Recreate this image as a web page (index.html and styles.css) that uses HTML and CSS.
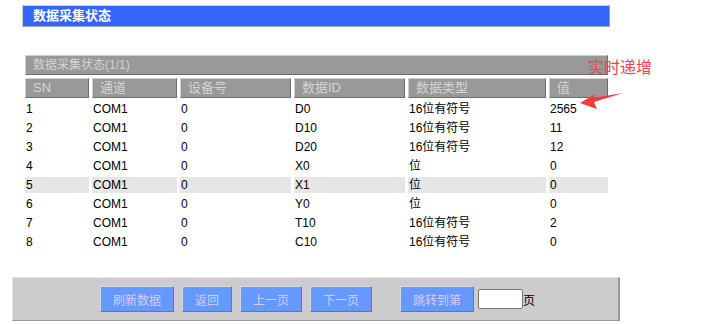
FILE: index.html
```html
<!DOCTYPE html>
<html lang="zh-CN">

<head>
    <meta charset="UTF-8">
    <meta name="viewport" content="width=device-width, initial-scale=1.0">
    <title>数据采集状态</title>
    <link rel="stylesheet" href="styles.css">
</head>

<body>
    <div class="page">
        <div class="title-bar">数据采集状态</div>

        <table class="grid">
            <colgroup>
                <col class="c-sn">
                <col class="c-chan">
                <col class="c-dev">
                <col class="c-id">
                <col class="c-type">
                <col class="c-val">
            </colgroup>
            <tr>
                <th class="cap" colspan="6">数据采集状态(1/1)</th>
            </tr>
            <tr>
                <th>SN</th>
                <th>通道</th>
                <th>设备号</th>
                <th>数据ID</th>
                <th>数据类型</th>
                <th>值</th>
            </tr>
            <tr><td>1</td><td>COM1</td><td>0</td><td>D0</td><td>16位有符号</td><td>2565</td></tr>
            <tr><td>2</td><td>COM1</td><td>0</td><td>D10</td><td>16位有符号</td><td>11</td></tr>
            <tr><td>3</td><td>COM1</td><td>0</td><td>D20</td><td>16位有符号</td><td>12</td></tr>
            <tr><td>4</td><td>COM1</td><td>0</td><td>X0</td><td>位</td><td>0</td></tr>
            <tr class="on"><td>5</td><td>COM1</td><td>0</td><td>X1</td><td>位</td><td>0</td></tr>
            <tr><td>6</td><td>COM1</td><td>0</td><td>Y0</td><td>位</td><td>0</td></tr>
            <tr><td>7</td><td>COM1</td><td>0</td><td>T10</td><td>16位有符号</td><td>2</td></tr>
            <tr><td>8</td><td>COM1</td><td>0</td><td>C10</td><td>16位有符号</td><td>0</td></tr>
        </table>

        <div class="tool-bar">
            <button class="btn">刷新数据</button>
            <button class="btn">返回</button>
            <button class="btn">上一页</button>
            <button class="btn">下一页</button>
            <button class="btn jump">跳转到第</button>
            <input class="page-no" type="text">
            <span class="unit">页</span>
        </div>

        <!-- 标注：值这一列实时递增 -->
        <div class="note">实时递增</div>
        <svg class="note-arrow" width="50" height="20" viewBox="0 0 50 20">
            <polygon points="1,11 16,2 14,6 44,1 15,10 18,17" fill="#f43a3a" />
        </svg>
    </div>
</body>

</html>
```

FILE: styles.css
```css
html,
body {
    margin: 0;
    width: 100%;
    height: 100%;
    background: #fff;
}

body {
    font-family: "Liberation Sans", "Noto Sans CJK SC", sans-serif;
    font-size: 12px;
    color: #000;
}

.page {
    position: relative;
    padding: 5px 0 0 12px;
}

.title-bar {
    box-sizing: border-box;
    width: 588px;
    height: 22px;
    margin-left: 10px;
    padding-left: 10px;
    background: #3366ff;
    border: 1px solid;
    border-color: #d0d0d0 #a0a0a0 #a0a0a0 #d0d0d0;
    color: #fff;
    font-size: 13px;
    font-weight: bold;
    line-height: 20px;
}

.grid {
    margin: 25px 0 0 10px;
    width: 589px;
    table-layout: fixed;
    border-collapse: separate;
    border-spacing: 3px;
}

.c-sn { width: 64px; }
.c-chan { width: 85px; }
.c-dev { width: 111px; }
.c-id { width: 111px; }
.c-type { width: 138px; }
.c-val { width: 59px; }

.grid th {
    box-sizing: border-box;
    height: 20px;
    padding: 0 0 0 7px;
    background: #999;
    border: 1px solid;
    border-color: #cfcfcf #6e6e6e #6e6e6e #cfcfcf;
    color: #d4d4d4;
    font-weight: normal;
    font-size: 13px;
    text-align: left;
    line-height: 18px;
    white-space: nowrap;
}

.grid th.cap {
    font-size: 12px;
}

.grid td {
    height: 16px;
    padding: 0 0 0 1px;
    line-height: 16px;
    white-space: nowrap;
}

.grid tr.on td {
    background: #e6e6e6;
}

.tool-bar {
    box-sizing: border-box;
    display: flex;
    align-items: center;
    justify-content: center;
    width: 608px;
    height: 44px;
    margin-top: 24px;
    padding-left: 4px;
    background: #ccc;
    border: 1px solid;
    border-width: 1px 2px 1px 1px;
    border-color: #e4e4e4 #999 #999 #e4e4e4;
}

.btn {
    height: 26px;
    margin-right: 8px;
    padding: 0 12px;
    background: #6699ff;
    border: 1px solid;
    border-color: #d8d8d8 #777 #777 #d8d8d8;
    color: #d6ccff;
    font-family: "Liberation Sans", "Noto Sans CJK SC", sans-serif;
    font-size: 12px;
}

.btn.jump {
    margin-left: 20px;
    margin-right: 4px;
}

.page-no {
    box-sizing: border-box;
    width: 45px;
    height: 20px;
    padding: 0 2px;
    border: 1px solid #777;
    border-radius: 2px;
    background: #fff;
}

.unit {
    font-size: 12px;
}

.note {
    position: absolute;
    left: 588px;
    top: 58px;
    color: #f04545;
    font-size: 16px;
    line-height: 20px;
}

.note-arrow {
    position: absolute;
    left: 579px;
    top: 92px;
}
```
